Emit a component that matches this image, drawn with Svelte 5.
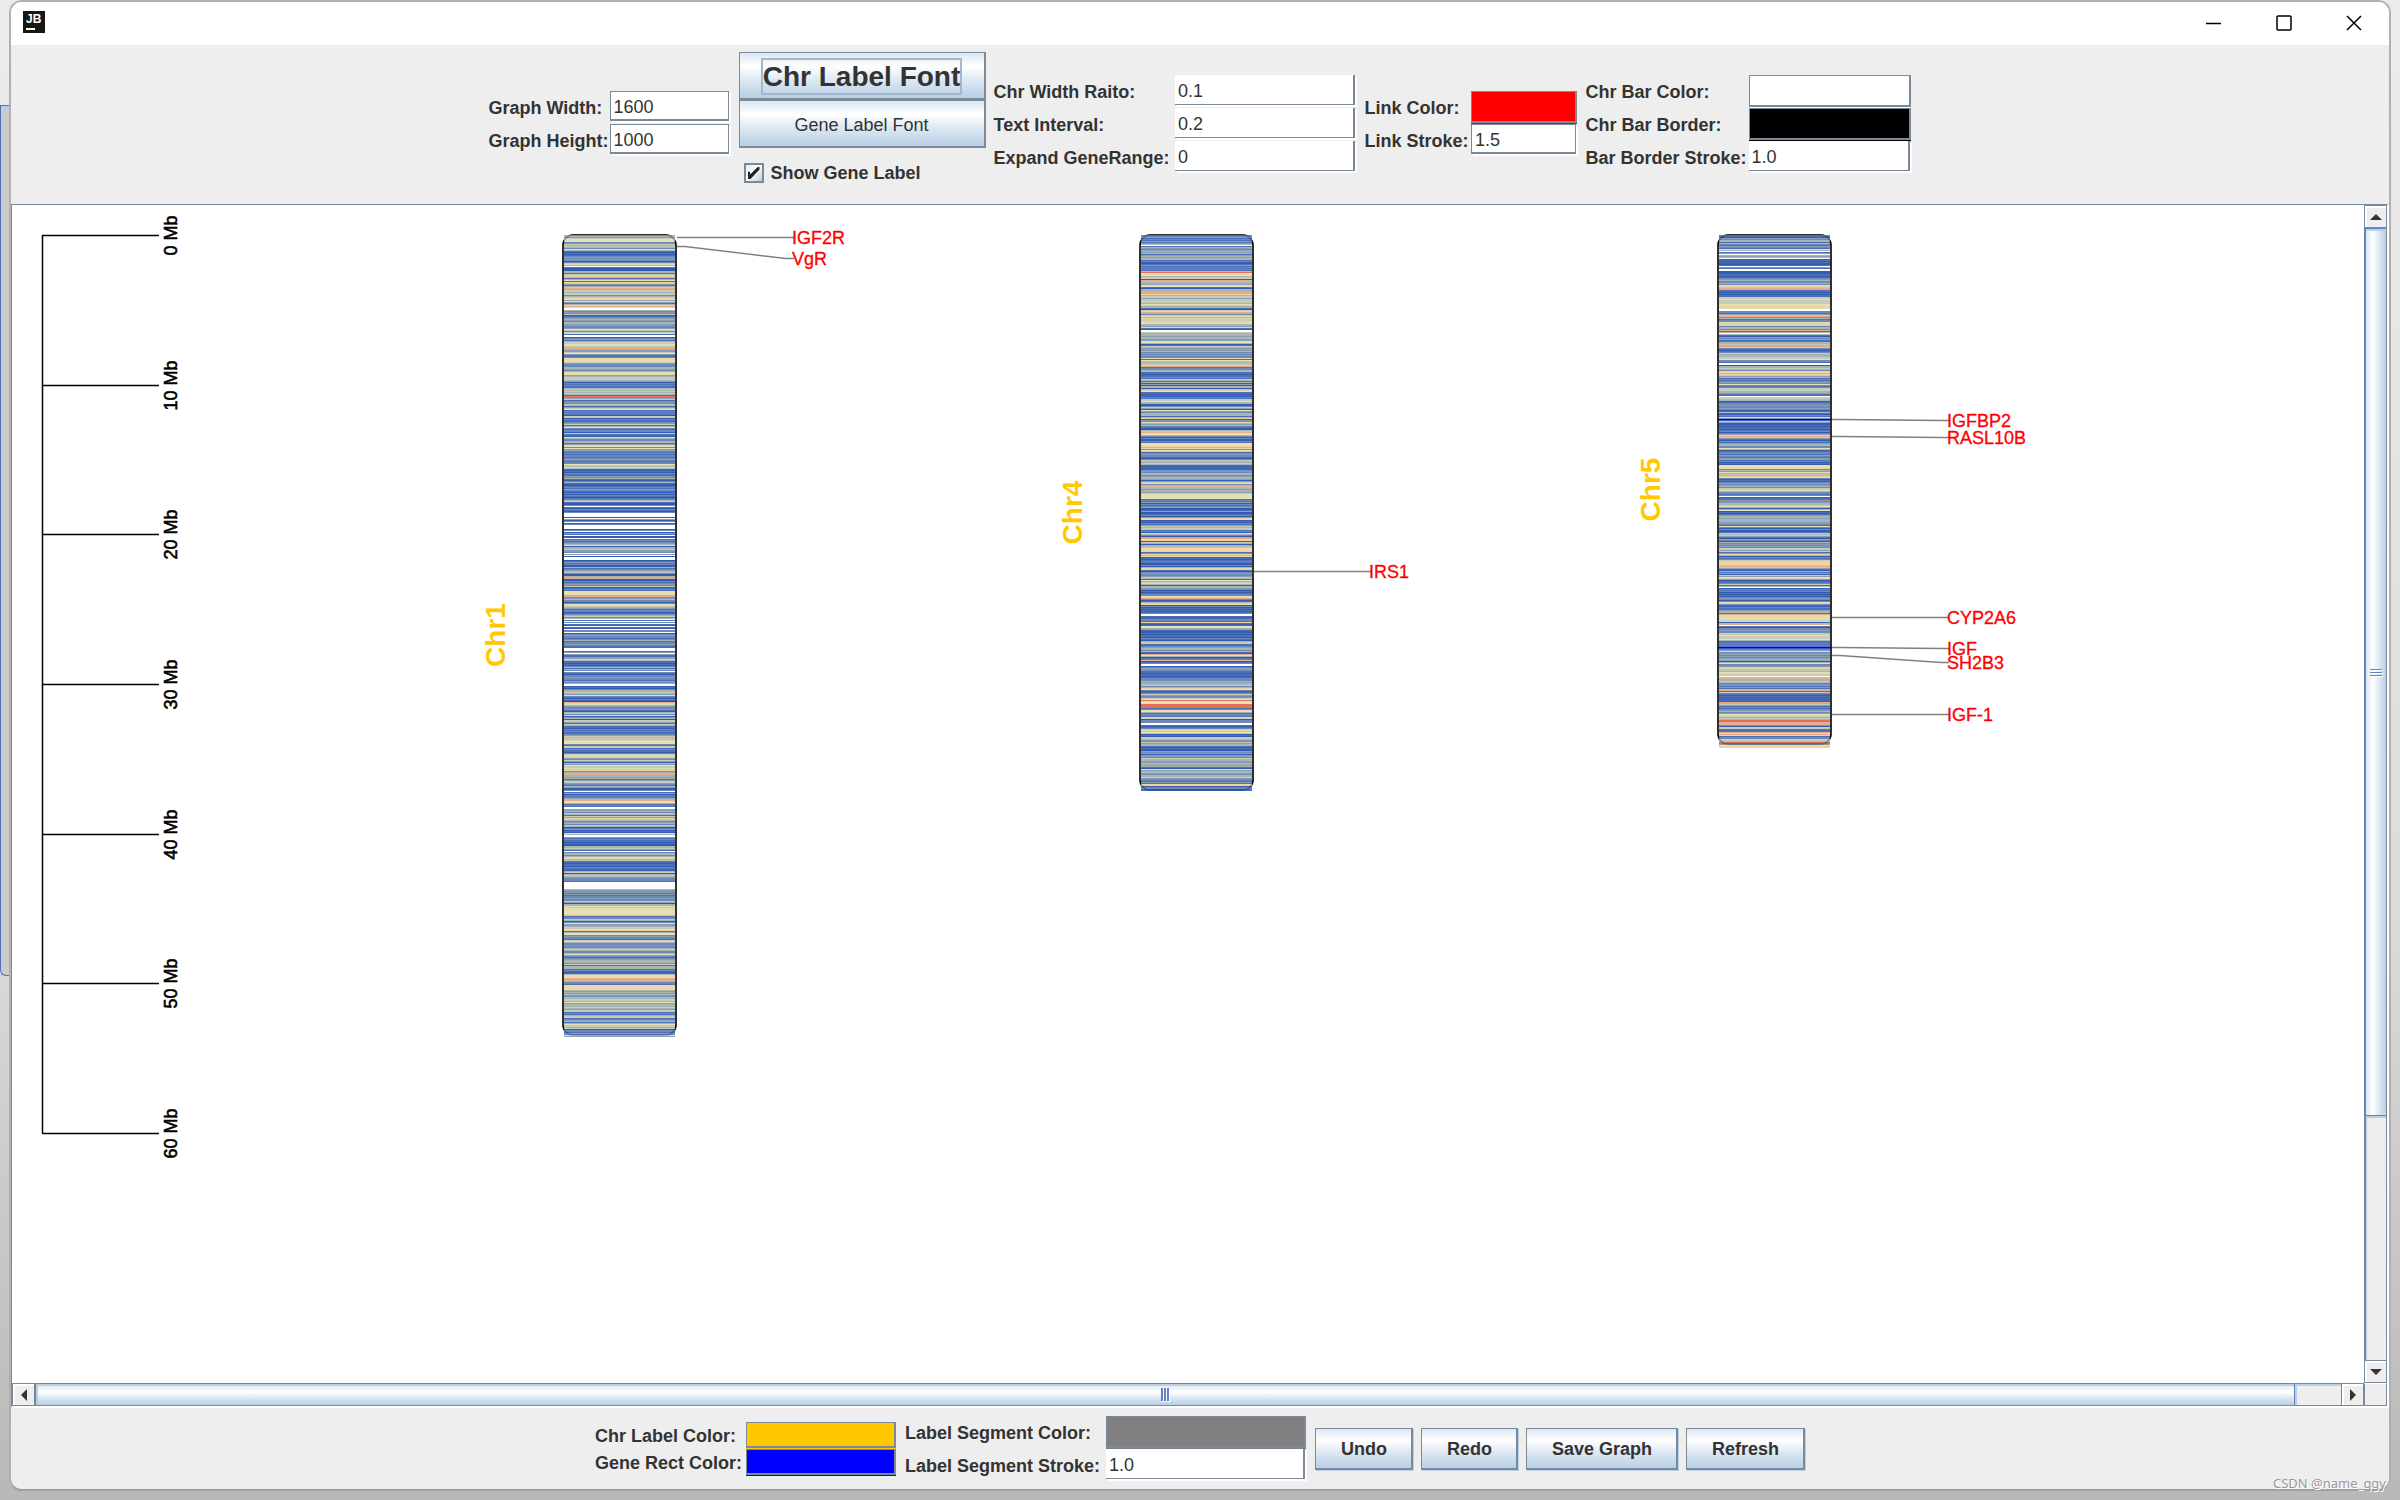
<script lang="ts">
	type Gene = { name: string; from: number; to: number; rect?: boolean };
	type Chromosome = { name: string; x: number; height: number; bands: string; genes: Gene[] };

	let graphWidth = $state('1600');
	let graphHeight = $state('1000');
	let showGeneLabel = $state(true);
	let widthRatio = $state('0.1');
	let textInterval = $state('0.2');
	let expandRange = $state('0');
	let linkStroke = $state('1.5');
	let barBorderStroke = $state('1.0');
	let segmentStroke = $state('1.0');

	const linkColor = '#ff0000';
	const barColor = '#ffffff';
	const barBorder = '#000000';
	const chrLabelColor = '#ffc800';
	const geneRectColor = '#0000ff';
	const segmentColor = '#808080';

	const TOP = 30;
	const BAR_WIDTH = 113;
	const TICK_STEP = 149.67;
	const ticks = [0, 10, 20, 30, 40, 50, 60];

	// gene density, low to high; 0 leaves the bar colour visible
	const density: Record<string, string> = {
		'1': '#345cb2',
		'2': '#4c71b8',
		'3': '#6b89bb',
		'4': '#8a9fb6',
		'5': '#a8b5b5',
		'6': '#c6ccb8',
		'7': '#e5e0b2',
		'8': '#efd3a0',
		'9': '#e9ac88',
		A: '#e2705a'
	};

	const chromosomes: Chromosome[] = [
		{
			name: 'Chr1',
			x: 551,
			height: 800,
			bands:
				'55467773A65653752121' + '23434313675021115526' + '68925728642569566566' +
				'35687474258980053436' + '12345435544334763672' + '00134256677699544674' +
				'22388776433355435787' + '45666541323225656565' + '2AA46234365246723232' +
				'16613223462573233162' + '21753355248737443232' + '33234323376575212132' +
				'24352135211232432131' + '32123562113021321300' + '00104130130000130142' +
				'01102323457155644304' + '01000124231152345631' + '15591132343612327777' +
				'59345331378654233123' + '56350203021021033013' + '433235' +
				'23343220002404224485' + '22121352530321334332' + '43500121355654832131' +
				'19875433421563714516' + '64265221323223469698' + '77732662322136876436' +
				'41547667673599554524' + '66432541130241323499' + '77523200445365264865' +
				'34536512412175004232' + '21211556420355358756' + '22122132215615654333' +
				'20000000543424233433' + '64155767877778623365' + '13744566782577343326' +
				'75334335653357432345' + '55A62555232125777999' + '53327878754545439566' +
				'57455565466232566234' + '5257665613324374',
			genes: [
				{ name: 'IGF2R', from: 32, to: 32 },
				{ name: 'VgR', from: 41, to: 53 }
			]
		},
		{
			name: 'Chr4',
			x: 1128,
			height: 555,
			bands:
				'33423242450254345452' + '45455231124232329A78' + '75661995547721555998' +
				'56646666576552168953' + '67576688755482100655' + '54554477512654445343' +
				'43372795966923355221' + '22326525141551987221' + '21326675511364174355' +
				'52581437545321156977' + '53131132777898A76234' + '33213655652121234355' +
				'34554146739995455467' + '77772324132341124112' + '31487121324656623175' +
				'315988165155687882A8' + '97121232113158821343' + '34652756851554312123' +
				'37893125881312121230' + '02123328212775421121' + '22132156622345535219' +
				'75123912300134432212' + '21233354556358831236' + '43A67A777AAAA2377523' +
				'32761333002123676761' + '21665436455212114341' + '44365544554521745543' +
				'5564332428813322',
			genes: [{ name: 'IRS1', from: 366, to: 366 }]
		},
		{
			name: 'Chr5',
			x: 1706,
			height: 509,
			bands:
				'32143552532432750240' + '54501212112042001112' + '21234533537869922121' +
				'22667666677887003324' + '69A52337676355392505' + '21434225565963212365' +
				'55667332001556538898' + '64523234373236665542' + '20669512334334312521' +
				'32752264112122123134' + '89642132455337512332' + '43244231217778354756' +
				'58831213434536675332' + '30122434556751571212' + '45545554432731311265' +
				'64214315343436646248' + '51323688886964215241' + '64774122362501323121' +
				'21343137832132245529' + '87877671990213343366' + '76667522323322347344' +
				'34345415733467965786' + '60995565334242992632' + '12121219564232345347' +
				'86565AA999A166222989' + '8233669A34788',
			genes: [
				{ name: 'IGFBP2', from: 214, to: 215, rect: true },
				{ name: 'RASL10B', from: 231, to: 232 },
				{ name: 'CYP2A6', from: 412, to: 412 },
				{ name: 'IGF', from: 442, to: 443, rect: true },
				{ name: 'SH2B3', from: 450, to: 457 },
				{ name: 'IGF-1', from: 509, to: 509 }
			]
		}
	];

	// merge neighbouring windows of equal density into one rect
	function runs(bands: string) {
		const out: { y: number; h: number; fill: string }[] = [];
		let start = 0;
		for (let i = 1; i <= bands.length; i++) {
			if (bands[i] === bands[start]) continue;
			out.push({ y: TOP + start, h: i - start, fill: density[bands[start]] ?? barColor });
			start = i;
		}
		return out;
	}
</script>

{#snippet swatch(id: string, color: string)}
	<button {id} class="swatch" type="button" aria-label={color} style="--swatch: {color}"></button>
{/snippet}

<div class="desktop">
	<div class="behind"></div>
	<main class="window">
		<header class="titlebar">
			<svg class="logo" width="22" height="22" viewBox="0 0 22 22" role="img" aria-label="JetBrains">
				<rect width="22" height="22" fill="#161616" />
				<text x="3" y="12" class="logo-text">JB</text>
				<rect x="3" y="17" width="9" height="2" fill="#fff" />
			</svg>
			<div class="caption">
				<button type="button" aria-label="Minimize">
					<svg width="16" height="16"><path d="M0 8.5H15" /></svg>
				</button>
				<button type="button" aria-label="Maximize">
					<svg width="16" height="16"><rect x="1" y="1" width="14" height="14" rx="1" /></svg>
				</button>
				<button type="button" aria-label="Close">
					<svg width="16" height="16"><path d="M1 1L15 15M15 1L1 15" /></svg>
				</button>
			</div>
		</header>

		<section class="panel top">
			<div class="form size">
				<label for="gw">Graph Width:</label>
				<input id="gw" class="field boxed" bind:value={graphWidth} />
				<label for="gh">Graph Height:</label>
				<input id="gh" class="field boxed" bind:value={graphHeight} />
			</div>

			<div class="fonts">
				<button class="metal chr-font" type="button"><span>Chr Label Font</span></button>
				<button class="metal gene-font" type="button">Gene Label Font</button>
				<label class="check">
					<input type="checkbox" bind:checked={showGeneLabel} />
					Show Gene Label
				</label>
			</div>

			<div class="form tall ratio">
				<label for="cw">Chr Width Raito:</label>
				<input id="cw" class="field" bind:value={widthRatio} />
				<label for="ti">Text Interval:</label>
				<input id="ti" class="field" bind:value={textInterval} />
				<label for="er">Expand GeneRange:</label>
				<input id="er" class="field" bind:value={expandRange} />
			</div>

			<div class="form link">
				<label for="lc">Link Color:</label>
				{@render swatch('lc', linkColor)}
				<label for="ls">Link Stroke:</label>
				<input id="ls" class="field boxed" bind:value={linkStroke} />
			</div>

			<div class="form tall bar">
				<label for="bc">Chr Bar Color:</label>
				{@render swatch('bc', barColor)}
				<label for="bb">Chr Bar Border:</label>
				{@render swatch('bb', barBorder)}
				<label for="bs">Bar Border Stroke:</label>
				<input id="bs" class="field" bind:value={barBorderStroke} />
			</div>
		</section>

		<section class="scroll-pane">
			<div class="viewport">
				<svg class="graph" width="2352" height="1178">
					<path class="axis" d="M30.5 {TOP}V{TOP + 6 * TICK_STEP}" />
					{#each ticks as mb, i}
						{@const y = Math.round(TOP + i * TICK_STEP) + 0.5}
						<path class="axis" d="M30 {y}H147" />
						<text class="tick" text-anchor="middle" transform="translate(165 {y}) rotate(-90)">{mb} Mb</text>
					{/each}

					{#each chromosomes as chr}
						{@const right = chr.x + BAR_WIDTH}
						<text
							class="chr-name"
							fill={chrLabelColor}
							text-anchor="middle"
							transform="translate({chr.x - 58} {TOP + chr.height / 2}) rotate(-90)">{chr.name}</text
						>
						<rect class="bar-border" x={chr.x} y={TOP} width={BAR_WIDTH} height={chr.height} rx="10" fill={barColor} stroke={barBorder} />
						<g shape-rendering="crispEdges">
							{#each runs(chr.bands) as b}
								<rect x={chr.x + 1} y={b.y} width={BAR_WIDTH - 2} height={b.h} fill={b.fill} />
							{/each}
						</g>
						<rect class="bar-border shade" x={chr.x} y={TOP} width={BAR_WIDTH} height={chr.height} rx="10" fill="none" stroke={barBorder} />
						{#each chr.genes as g}
							{#if g.rect}
								<path d="M{chr.x - 1} {g.from + 0.5}H{right + 1}" stroke={geneRectColor} stroke-width="1.5" />
							{/if}
							{#if showGeneLabel}
								<path
									class="segment"
									stroke={segmentColor}
									d="M{right + 1} {g.from + 0.5}H{right + 9}L{right + 110} {g.to + 0.5}H{right + 118}"
								/>
								<text class="gene" fill={linkColor} stroke={linkColor} x={right + 116} y={g.to + 7}>{g.name}</text>
							{/if}
						{/each}
					{/each}
				</svg>
			</div>

			<div class="scrollbar vertical">
				<button type="button" aria-label="Scroll up"><svg width="12" height="6"><path d="M6 0L12 6H0Z" /></svg></button>
				<div class="thumb"><i></i><i></i><i></i></div>
				<div class="track"></div>
				<button type="button" aria-label="Scroll down"><svg width="12" height="6"><path d="M0 0H12L6 6Z" /></svg></button>
			</div>

			<div class="scrollbar horizontal">
				<button type="button" aria-label="Scroll left"><svg width="6" height="12"><path d="M6 0V12L0 6Z" /></svg></button>
				<div class="thumb"><i></i><i></i><i></i></div>
				<div class="track"></div>
				<button type="button" aria-label="Scroll right"><svg width="6" height="12"><path d="M0 0L6 6L0 12Z" /></svg></button>
			</div>
			<div class="corner"></div>
		</section>

		<section class="panel bottom">
			<div class="form colors">
				<label for="clc">Chr Label Color:</label>
				{@render swatch('clc', chrLabelColor)}
				<label for="grc">Gene Rect Color:</label>
				{@render swatch('grc', geneRectColor)}
			</div>
			<div class="form segments">
				<label for="lsc">Label Segment Color:</label>
				{@render swatch('lsc', segmentColor)}
				<label for="lss">Label Segment Stroke:</label>
				<input id="lss" class="field" bind:value={segmentStroke} />
			</div>
			<button class="metal action" type="button">Undo</button>
			<button class="metal action" type="button">Redo</button>
			<button class="metal action" type="button">Save Graph</button>
			<button class="metal action" type="button">Refresh</button>
		</section>
	</main>
	<div class="watermark">CSDN @name_qgy</div>
</div>

<style>
	:global(body) {
		margin: 0;
	}
	.desktop {
		--line: #7a8a99;
		--steel: #b8cfe5;
		--accent: #6382bf;
		--panel: #eeeeee;
		position: relative;
		box-sizing: border-box;
		display: flex;
		min-height: 100vh;
		padding: 0 9px;
		padding-bottom: 9px;
		background: linear-gradient(#ececec, #dcdcdc 60%, #b8b8b8);
		font-family: 'Liberation Sans', Arial, sans-serif;
		font-size: 18px;
		line-height: 20px;
		color: #333;
	}
	/* edge of the window underneath */
	.behind {
		position: absolute;
		left: 0;
		top: 105px;
		bottom: 524px;
		width: 12px;
		box-sizing: border-box;
		border: 1px solid #5070b8;
		border-right: 0;
		border-bottom-left-radius: 6px;
		background: #cbcbcb;
		box-shadow: inset 1px 3px 0 var(--steel);
	}
	.window {
		position: relative;
		flex: 1;
		min-width: 0;
		display: flex;
		flex-direction: column;
		border: 2px solid #b0b0b0;
		border-bottom-color: #a0a0a0;
		border-radius: 13px;
		overflow: hidden;
		background: var(--panel);
	}
	.titlebar {
		display: flex;
		justify-content: space-between;
		height: 43px;
		background: #fff;
	}
	.logo {
		margin: 9px 12px;
	}
	.logo-text {
		font-size: 12px;
		font-weight: 700;
		fill: #fff;
	}
	.caption {
		display: flex;
	}
	.caption button {
		display: grid;
		place-content: center;
		width: 70px;
		padding: 0 0 2px;
		border: 0;
		background: none;
	}
	.caption svg {
		display: block;
		fill: none;
		stroke: #000;
		stroke-width: 1.5;
	}
	.panel {
		display: flex;
		justify-content: center;
		align-items: center;
		gap: 8px;
	}
	.panel.top {
		padding: 7px 0 8px;
	}
	.panel.bottom {
		padding: 8px 0 7px;
	}
	.form {
		display: grid;
		grid-template-columns: 1fr 1fr;
		grid-auto-rows: 33px;
	}
	.form label {
		align-self: center;
		font-weight: 700;
		white-space: nowrap;
	}
	.size {
		width: 242px;
	}
	.ratio {
		width: 363px;
	}
	.link {
		width: 213px;
	}
	.bar {
		width: 326px;
	}
	.colors {
		width: 302px;
		grid-auto-rows: 27px;
	}
	.segments {
		width: 402px;
	}
	.field {
		box-sizing: border-box;
		min-width: 0;
		margin: 0 2px 3px 0;
		padding: 2px 3px 0;
		border: 0 solid var(--line);
		border-width: 0 2px 1px 0;
		border-radius: 0;
		outline: 0;
		background: #fff;
		box-shadow: 2px 2px 0 #fff;
		font: inherit;
		color: inherit;
	}
	.field.boxed {
		padding-top: 3px;
		border-width: 1px 1px 2px 1px;
	}
	.tall label {
		padding-top: 2px;
	}
	.tall .field {
		padding-top: 4px;
	}
	.swatch {
		min-width: 0;
		margin: 0 1px 1px 0;
		padding: 0;
		border: solid var(--line);
		border-width: 1px 2px 2px 1px;
		background: var(--swatch);
		box-shadow: 0 1px 0 var(--swatch);
	}
	.fonts {
		display: grid;
		grid-template-rows: repeat(3, 48px);
		width: 247px;
	}
	.metal {
		padding: 0;
		border: solid var(--line);
		border-width: 1px 2px 2px 1px;
		background: linear-gradient(#dde8f3, #fff 30%, #dde8f3 60%, var(--steel));
		font: inherit;
		color: inherit;
	}
	.metal.chr-font {
		padding-top: 1px;
		font-size: 28px;
		line-height: 33px;
		font-weight: 700;
	}
	.metal.gene-font {
		padding-top: 2px;
	}
	.chr-font span {
		display: inline-block;
		border: 2px solid #a3b8cc;
	}
	.check {
		display: flex;
		align-items: center;
		gap: 7px;
		padding: 2px 0 0 5px;
		font-weight: 700;
	}
	.check input {
		appearance: none;
		display: grid;
		place-content: center;
		width: 20px;
		height: 20px;
		margin: 0;
		border: 2px solid var(--line);
		background: linear-gradient(135deg, #dde8f3, #fff 40%, var(--steel));
	}
	.check input:checked::before {
		content: '';
		width: 12px;
		height: 12px;
		background: #222;
		clip-path: polygon(0 40%, 22% 40%, 22% 62%, 85% 0, 100% 0, 100% 20%, 25% 100%, 0 100%);
	}
	.action {
		height: 42px;
		padding: 0 24px 0 25px;
		font-weight: 700;
		box-shadow: 1px 1px 0 var(--steel);
	}
	.scroll-pane {
		flex: 1;
		min-height: 0;
		display: grid;
		grid-template-columns: minmax(0, 1fr) 23px;
		grid-template-rows: minmax(0, 1fr) 23px;
		border: solid var(--line);
		border-width: 1px 2px 2px 1px;
		border-right-color: #fff;
		border-bottom-color: #fff;
		background: #fff;
	}
	.viewport {
		overflow: hidden;
	}
	.graph {
		display: block;
	}
	.axis {
		stroke: #000;
		stroke-width: 1.5;
		fill: none;
	}
	.tick {
		font-size: 18px;
		fill: #000;
		stroke: #000;
		stroke-width: 0.6;
	}
	.chr-name {
		font-size: 28px;
		font-weight: 700;
	}
	.bar-border {
		stroke-width: 1.5;
	}
	.shade {
		opacity: 0.3;
	}
	.segment {
		fill: none;
		stroke-width: 1.5;
	}
	.gene {
		font-size: 18px;
		stroke-width: 0.3;
	}
	.scrollbar {
		display: flex;
		box-sizing: border-box;
		background: var(--panel);
	}
	.vertical {
		flex-direction: column;
		border-right: 1px solid var(--line);
	}
	.horizontal {
		border-bottom: 1px solid var(--line);
	}
	.scrollbar button {
		flex: 0 0 23px;
		box-sizing: border-box;
		display: grid;
		place-content: center;
		padding: 0;
		border: 1px solid var(--line);
		background: var(--panel);
		box-shadow: inset 2px 2px 0 #fff;
	}
	.vertical button {
		border-right: 0;
	}
	.horizontal button {
		border-bottom: 0;
	}
	.scrollbar button path {
		fill: #333;
	}
	.scrollbar button svg {
		display: block;
	}
	.thumb {
		display: flex;
		align-items: center;
		justify-content: center;
		gap: 1px;
		border: 1px solid var(--accent);
	}
	.thumb i {
		background: var(--accent);
		box-shadow: 1px 1px 0 #fff;
	}
	.vertical .thumb {
		flex: 888 1 0;
		flex-direction: column;
		gap: 2px;
		border-left-width: 2px;
		border-right: 0;
		background: linear-gradient(90deg, #dde8f3, #fff 35%, #dde8f3 65%, var(--steel));
		box-shadow: inset 0 2px 0 var(--steel);
	}
	.vertical .thumb i {
		width: 12px;
		height: 1px;
	}
	.vertical .track {
		flex: 244 1 0;
		border-left: 2px solid var(--line);
		box-shadow: inset 1px 2px 0 var(--steel);
	}
	.horizontal .thumb {
		flex: 2260 1 0;
		border-bottom: 0;
		background: linear-gradient(#dde8f3, #fff 40%, #dde8f3 65%, var(--steel));
		box-shadow: inset 2px 2px 0 var(--steel);
	}
	.horizontal .thumb i {
		width: 2px;
		height: 13px;
	}
	.horizontal .track {
		flex: 46 1 0;
		border-top: 1px solid var(--line);
		box-shadow: inset 2px 2px 0 var(--steel);
	}
	.corner {
		border: 1px solid var(--line);
		border-top-color: #fff;
	}
	.corner,
	.track {
		background: var(--panel);
	}
	.watermark {
		position: absolute;
		right: 14px;
		bottom: 7px;
		font-family: 'Noto Sans', sans-serif;
		font-size: 13px;
		color: #999;
		text-shadow: 1px 1px 0 #fff;
	}
</style>
